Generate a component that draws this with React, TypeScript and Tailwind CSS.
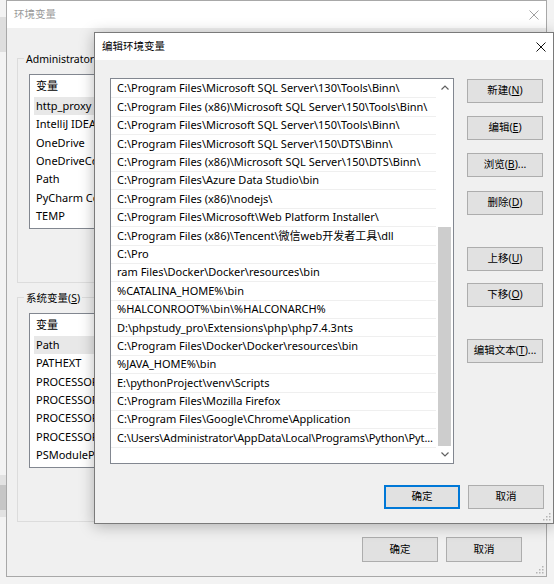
import React from "react";

const pathEntries = [
  "C:\\Program Files\\Microsoft SQL Server\\130\\Tools\\Binn\\",
  "C:\\Program Files (x86)\\Microsoft SQL Server\\150\\Tools\\Binn\\",
  "C:\\Program Files\\Microsoft SQL Server\\150\\Tools\\Binn\\",
  "C:\\Program Files\\Microsoft SQL Server\\150\\DTS\\Binn\\",
  "C:\\Program Files (x86)\\Microsoft SQL Server\\150\\DTS\\Binn\\",
  "C:\\Program Files\\Azure Data Studio\\bin",
  "C:\\Program Files (x86)\\nodejs\\",
  "C:\\Program Files\\Microsoft\\Web Platform Installer\\",
  "C:\\Program Files (x86)\\Tencent\\微信web开发者工具\\dll",
  "C:\\Pro",
  "ram Files\\Docker\\Docker\\resources\\bin",
  "%CATALINA_HOME%\\bin",
  "%HALCONROOT%\\bin\\%HALCONARCH%",
  "D:\\phpstudy_pro\\Extensions\\php\\php7.4.3nts",
  "C:\\Program Files\\Docker\\Docker\\resources\\bin",
  "%JAVA_HOME%\\bin",
  "E:\\pythonProject\\venv\\Scripts",
  "C:\\Program Files\\Mozilla Firefox",
  "C:\\Program Files\\Google\\Chrome\\Application",
  "C:\\Users\\Administrator\\AppData\\Local\\Programs\\Python\\Pyt...",
];

// only the part left of the modal is visible in the picture
const userVars = ["http_proxy", "IntelliJ IDEA", "OneDrive", "OneDriveCo", "Path", "PyCharm Co", "TEMP"];
const systemVars = ["Path", "PATHEXT", "PROCESSOR", "PROCESSOR", "PROCESSOR", "PROCESSOR", "PSModuleP"];

const CloseIcon = ({ color }: { color: string }) => (
  <svg width="10" height="10" viewBox="0 0 10 10">
    <path d="M0.5 0.5L9.5 9.5M9.5 0.5L0.5 9.5" stroke={color} strokeWidth="1" />
  </svg>
);

const Grip = () => (
  <svg width="8" height="8" viewBox="0 0 8 8" className="absolute bottom-[2px] right-[2px]">
    <rect x="6" y="0" width="1.5" height="1.5" fill="#b4b4b4" />
    <rect x="3" y="3" width="1.5" height="1.5" fill="#b4b4b4" />
    <rect x="6" y="3" width="1.5" height="1.5" fill="#b4b4b4" />
    <rect x="0" y="6" width="1.5" height="1.5" fill="#b4b4b4" />
    <rect x="3" y="6" width="1.5" height="1.5" fill="#b4b4b4" />
    <rect x="6" y="6" width="1.5" height="1.5" fill="#b4b4b4" />
  </svg>
);

const Chevron = ({ up }: { up?: boolean }) => (
  <svg width="8" height="5" viewBox="0 0 8 5">
    <path
      d={up ? "M0.5 4.5L4 1L7.5 4.5" : "M0.5 0.5L4 4L7.5 0.5"}
      stroke="#606060"
      strokeWidth="1.2"
      fill="none"
    />
  </svg>
);

type BtnProps = {
  label: string;
  hotkey?: string;
  dots?: boolean;
  primary?: boolean;
  tall?: boolean;
};

const WinButton = ({ label, hotkey, dots, primary, tall }: BtnProps) => (
  <div
    className={
      primary
        ? "flex h-[24px] w-[76px] items-center justify-center border border-[#0078d7] bg-[#e1e1e1] shadow-[inset_0_0_0_1px_#0078d7]"
        : tall
        ? "flex h-[25px] w-[76px] items-center justify-center border border-[#adadad] bg-[#e1e1e1]"
        : "flex h-[24px] w-[76px] items-center justify-center border border-[#adadad] bg-[#e1e1e1]"
    }
  >
    <span>
      {label}
      {hotkey && (
        <>
          (<span className="underline">{hotkey}</span>)
        </>
      )}
      {dots && "..."}
    </span>
  </div>
);

const VarList = ({ rows }: { rows: string[] }) => (
  <div className="flex h-[155px] w-[470px] flex-col border border-[#828790] bg-white text-[11px]">
    <div className="flex h-[22px] shrink-0 items-center pl-[6px]">
      <span>变量</span>
    </div>
    {rows.map((name, i) => (
      <div
        key={i}
        className={
          i === 0
            ? "ml-[4px] flex h-[18.35px] shrink-0 items-center bg-[#e8e8e8] pl-[2px]"
            : "ml-[4px] flex h-[18.35px] shrink-0 items-center pl-[2px]"
        }
      >
        <span className="whitespace-nowrap">{name}</span>
      </div>
    ))}
  </div>
);

const GroupBox = ({
  label,
  hotkey,
  rows,
  className,
}: {
  label: string;
  hotkey: string;
  rows: string[];
  className?: string;
}) => (
  <div className={"relative h-[225px] w-[518px] border border-[#dcdcdc] pl-[11px] pt-[15px] " + (className ?? "")}>
    <span className="absolute left-[6px] top-[-8px] bg-[#f0f0f0] px-[2px] leading-[16px]">
      {label}(<span className="underline">{hotkey}</span>)
    </span>
    <VarList rows={rows} />
  </div>
);

export default function App() {
  return (
    <div className="relative h-[584px] w-[554px] overflow-hidden bg-[#f3f3f3] font-['Noto_Sans','Noto_Sans_CJK_SC',sans-serif] text-[10.5px] text-black">
      {/* window lying behind */}
      <div className="absolute left-0 top-[17px] h-[35px] w-[6px] bg-[#dedede]" />
      <div className="absolute left-0 top-[475px] h-[42px] w-[6px] bg-[#e2e2e2] pt-[10px]">
        <div className="h-[25px] bg-[#c6c6c6]" />
      </div>

      {/* 环境变量 */}
      <div className="absolute left-[6px] top-0 flex h-[577px] w-[541px] flex-col border border-[#a8a8a8] bg-[#f0f0f0]">
        <div className="flex h-[27px] shrink-0 items-center justify-between bg-white pl-[7px] pr-[7px] text-[#9a9a9a]">
          <span>环境变量</span>
          <CloseIcon color="#a0a0a0" />
        </div>
        <div className="flex flex-1 flex-col pl-[10px] pt-[30px]">
          <GroupBox label="Administrator 的用户变量" hotkey="U" rows={userVars} />
          <GroupBox label="系统变量" hotkey="S" rows={systemVars} className="mt-[14px]" />
          <div className="mt-[15px] flex justify-end gap-[8px] pr-[24px]">
            <WinButton label="确定" tall />
            <WinButton label="取消" tall />
          </div>
        </div>
        <Grip />
      </div>

      {/* 编辑环境变量 */}
      <div className="absolute left-[94px] top-[32px] flex h-[492px] w-[460px] flex-col border border-[#7a7a7a] bg-[#f0f0f0] shadow-[0_2px_14px_rgba(0,0,0,0.28)]">
        <div className="flex h-[27px] shrink-0 items-center justify-between bg-white pl-[7px] pr-[7px]">
          <span>编辑环境变量</span>
          <CloseIcon color="#111" />
        </div>
        <div className="flex pl-[15px] pt-[18px]">
          <div className="flex h-[386px] w-[344px] border border-[#828790] bg-white">
            <div className="flex min-w-0 flex-1 flex-col pt-[1px] text-[11px]">
              {pathEntries.map((p, i) => (
                <div
                  key={i}
                  className="flex h-[18.4px] shrink-0 items-center overflow-hidden border-b border-[#efefef] pl-[6px]"
                >
                  <span
                    className={
                      i === pathEntries.length - 1
                        ? "whitespace-nowrap tracking-[-0.12px]"
                        : "whitespace-nowrap"
                    }
                  >
                    {p}
                  </span>
                </div>
              ))}
            </div>
            <div className="flex w-[17px] shrink-0 flex-col">
              <div className="flex h-[17px] items-center justify-center">
                <Chevron up />
              </div>
              <div className="flex-1">
                <div className="mx-[2px] mt-[131px] h-[219px] bg-[#cdcdcd]" />
              </div>
              <div className="flex h-[17px] items-center justify-center">
                <Chevron />
              </div>
            </div>
          </div>
          <div className="ml-[13px] flex flex-col pt-[1px]">
            <WinButton label="新建" hotkey="N" />
            <div className="mt-[13px]">
              <WinButton label="编辑" hotkey="E" />
            </div>
            <div className="mt-[13px]">
              <WinButton label="浏览" hotkey="B" dots />
            </div>
            <div className="mt-[14px]">
              <WinButton label="删除" hotkey="D" />
            </div>
            <div className="mt-[32px]">
              <WinButton label="上移" hotkey="U" />
            </div>
            <div className="mt-[12px]">
              <WinButton label="下移" hotkey="O" />
            </div>
            <div className="mt-[32px]">
              <WinButton label="编辑文本" hotkey="T" dots />
            </div>
          </div>
        </div>
        <div className="mt-[21px] flex justify-end gap-[8px] pr-[9px]">
          <WinButton label="确定" primary />
          <WinButton label="取消" />
        </div>
        <Grip />
      </div>
    </div>
  );
}
